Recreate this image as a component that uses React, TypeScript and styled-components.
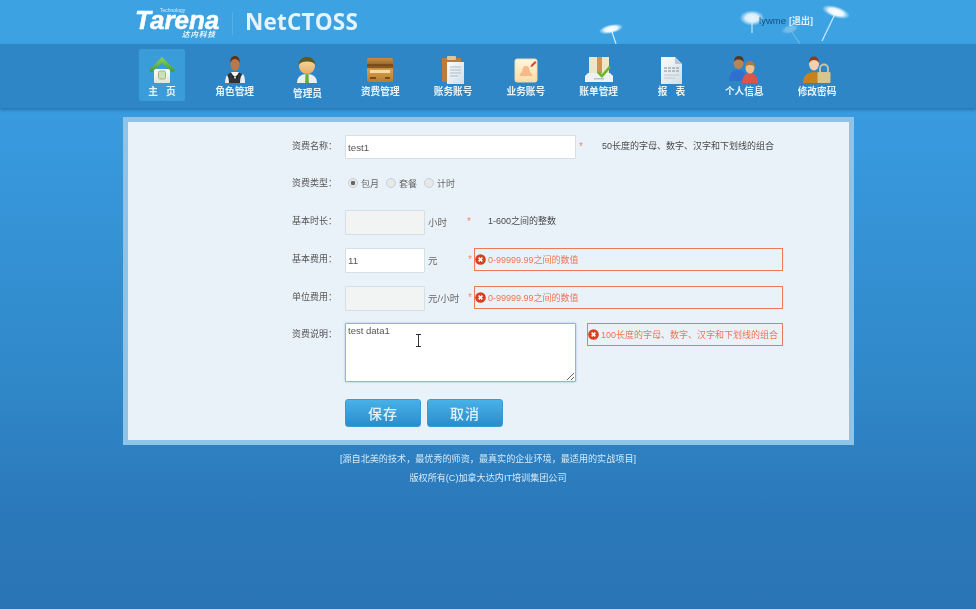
import React from "react";
import styled, { createGlobalStyle } from "styled-components";

const Global = createGlobalStyle`
  html, body { margin: 0; padding: 0; height: 100%; overflow: hidden; background: #2a74b4; }
  #root { height: 100%; }
  * { box-sizing: border-box; }
`;

const Page = styled.div`
  width: 976px;
  height: 609px;
  overflow: hidden;
  position: relative;
  font-family: "Liberation Sans", "Noto Sans CJK SC", sans-serif;
  font-size: 9px;
  color: #444;
  background: linear-gradient(180deg, #3a9de2 0, #399be0 110px, #3088c9 380px, #2b78b9 520px, #2a74b5 609px);
  filter: blur(0.5px);
`;

const Header = styled.header`
  position: relative;
  height: 44px;
  background: #3ca2e1;
  display: flex;
  align-items: flex-start;
  padding-left: 135px;
`;

const Logo = styled.div`
  position: relative;
  width: 98px;
  height: 36px;
  margin-top: 2px;
  &::after {
    content: "";
    position: absolute;
    right: 0;
    top: 10px;
    height: 23px;
    width: 1px;
    background: #55b0e8;
  }
`;
const LogoWord = styled.div`
  font: italic bold 26px/18px "Liberation Sans", sans-serif;
  color: #fff;
  margin-top: 9px;
  -webkit-text-stroke: 0.5px #fff;
`;
const LogoTech = styled.span`
  position: absolute;
  left: 25px;
  top: 5px;
  font: 5px/6px "Liberation Sans", sans-serif;
  color: #d7ecf9;
`;
const LogoCn = styled.div`
  font: italic bold 7.5px/9px "Noto Sans CJK SC", sans-serif;
  color: #eaf6fd;
  margin: 0 0 0 47px;
  letter-spacing: 1px;
`;
const Product = styled.h1`
  margin: 7px 0 0 12px;
  font: 700 22.5px/30px "Open Sans", sans-serif;
  letter-spacing: 0.2px;
  color: #e4f4fe;
`;
const UserBox = styled.div`
  margin: 15px 163px 0 auto;
  position: relative;
  z-index: 2;
  font-size: 9.5px;
  line-height: 12px;
  color: #17507f;
`;
const Logout = styled.a`
  color: #dff2fd;
  font-weight: 700;
  margin-left: 3px;
  font-size: 9px;
`;
const Dandelions = styled.svg`
  position: absolute;
  left: 590px;
  top: 0;
`;

const Nav = styled.nav`
  height: 64px;
  background: #2e86c6;
  box-shadow: 0 2px 3px rgba(25, 90, 145, 0.6);
  display: flex;
  padding: 5px 0 0 125.5px;
  position: relative;
`;
const NavItem = styled.div<{ $active?: boolean }>`
  width: 72.8px;
  height: 52px;
  display: flex;
  flex-direction: column;
  align-items: center;
  position: relative;
  padding-top: 6px;
  &::before {
    content: "";
    display: ${(p) => (p.$active ? "block" : "none")};
    position: absolute;
    left: 13.5px;
    top: 0;
    width: 46px;
    height: 52px;
    background: #3a9cd8;
    border-radius: 2px;
  }
`;
const NavIcon = styled.svg`
  position: relative;
  width: 30px;
  height: 30px;
`;
const NavLabel = styled.span<{ $low?: boolean }>`
  position: relative;
  margin-top: ${(p) => (p.$low ? "3px" : "1px")};
  font-size: 9.7px;
  line-height: 12px;
  font-weight: 700;
  color: #e6f3fb;
  white-space: pre;
`;

const Card = styled.main`
  width: 731px;
  height: 328px;
  margin: 9px 0 0 123px;
  background: #eaf2f9;
  border: 5px solid #8fc3e8;
  padding: 13px 0 0 164px;
`;
const Row = styled.div<{ $gap: number; $h?: number }>`
  display: flex;
  align-items: flex-start;
  margin-top: ${(p) => p.$gap}px;
  height: ${(p) => p.$h ?? 25}px;
`;
const Label = styled.label<{ $lh?: number }>`
  width: 53px;
  flex: none;
  line-height: ${(p) => p.$lh ?? 23}px;
  color: #555;
  font-size: 9px;
  white-space: pre;
`;
const TextInput = styled.input<{ $w: number; $h?: number }>`
  width: ${(p) => p.$w}px;
  height: ${(p) => p.$h ?? 25}px;
  flex: none;
  padding: 0 2px 0 2px;
  border: 1px solid #d6dfe6;
  border-radius: 1px;
  background: #fff;
  font: 9.8px "Liberation Sans", sans-serif;
  color: #555;
  outline: none;
  &:disabled { background: #f2f3f3; }
`;
const Unit = styled.span<{ $w: number }>`
  width: ${(p) => p.$w}px;
  flex: none;
  padding-left: 3px;
  line-height: 26px;
  color: #666;
  font-size: 9.5px;
  white-space: nowrap;
`;
const Star = styled.span<{ $w?: number; $ml?: number }>`
  color: #f18a6b;
  font-size: 10px;
  line-height: 24px;
  flex: none;
  width: ${(p) => p.$w ?? 8}px;
  margin-left: ${(p) => p.$ml ?? 0}px;
`;
const Hint = styled.span<{ $ml: number }>`
  margin-left: ${(p) => p.$ml}px;
  line-height: 22px;
  color: #4a4a4a;
  font-size: 9px;
`;
const ErrorBox = styled.div<{ $w: number; $ml?: number }>`
  width: ${(p) => p.$w}px;
  height: 23px;
  flex: none;
  margin-left: ${(p) => p.$ml ?? 0}px;
  border: 1.5px solid #ec7a58;
  display: flex;
  align-items: center;
  gap: 2px;
  color: #ef7552;
  font-size: 9px;
`;
const ErrorGlyph = styled.svg`
  width: 11px;
  height: 11px;
  flex: none;
`;
const RadioGroup = styled.div`
  display: flex;
  align-items: center;
  height: 24px;
  padding-left: 3px;
`;
const RadioLabel = styled.label`
  display: flex;
  align-items: center;
  gap: 2px;
  margin-right: 7px;
  font-size: 9px;
  color: #666;
`;
const Radio = styled.input`
  appearance: none;
  width: 10px;
  height: 10px;
  margin: 0 1px 0 0;
  border: 1px solid #c9cfd3;
  border-radius: 50%;
  background: #e6e9ea;
  position: relative;
  &:checked {
    background: radial-gradient(circle, #666 0 2px, #e6e9ea 2.5px);
  }
`;
const AreaWrap = styled.div`
  position: relative;
  width: 231px;
  height: 59px;
  flex: none;
`;
const Area = styled.textarea`
  display: block;
  width: 231px;
  height: 59px;
  padding: 1px 2px;
  border: 1px solid #8fb3e4;
  border-radius: 1px;
  background: #fff;
  font: 9.5px/12px "Liberation Sans", sans-serif;
  color: #555;
  outline: none;
  box-shadow: 0 0 2px #8fb3e4;
`;
const Caret = styled.svg`
  position: absolute;
  left: 70px;
  top: 11px;
  width: 7px;
  height: 13px;
`;
const Buttons = styled.div`
  display: flex;
  gap: 6px;
  margin: 17px 0 0 53px;
`;
const Btn = styled.button`
  width: 76px;
  height: 28px;
  padding: 0;
  border: 1px solid #3b9ad6;
  border-radius: 3px;
  background: linear-gradient(180deg, #48b1e8 0, #2a8dcc 100%);
  color: #e2f3fc;
  font: 500 14px/26px "Noto Sans CJK SC", sans-serif;
  letter-spacing: 1px;
`;
const Footer = styled.footer`
  text-align: center;
  color: #d4eaf9;
  font-size: 9.1px;
  line-height: 19px;
  padding-top: 5px;
`;

const G = () => (
  <defs>
    <linearGradient id="roof" x1="0" y1="0" x2="0" y2="1"><stop offset="0" stopColor="#8fd45a" /><stop offset="1" stopColor="#3c9a2c" /></linearGradient>
    <linearGradient id="wall" x1="0" y1="0" x2="0" y2="1"><stop offset="0" stopColor="#fff" /><stop offset="1" stopColor="#dfe5d8" /></linearGradient>
    <linearGradient id="wood" x1="0" y1="0" x2="0" y2="1"><stop offset="0" stopColor="#c98d3f" /><stop offset="0.4" stopColor="#8a5a22" /><stop offset="0.45" stopColor="#d9a04c" /><stop offset="1" stopColor="#b57e30" /></linearGradient>
    <linearGradient id="paper" x1="0" y1="0" x2="1" y2="1"><stop offset="0" stopColor="#fafcfd" /><stop offset="1" stopColor="#d2dde5" /></linearGradient>
    <linearGradient id="skin" x1="0" y1="0" x2="0" y2="1"><stop offset="0" stopColor="#f9dca0" /><stop offset="1" stopColor="#e5ad68" /></linearGradient>
    <linearGradient id="note" x1="0" y1="0" x2="0" y2="1"><stop offset="0" stopColor="#fff7df" /><stop offset="1" stopColor="#f8dca6" /></linearGradient>
    <radialGradient id="puff"><stop offset="0" stopColor="#ffffff" /><stop offset="0.55" stopColor="#f2fbff" stopOpacity="0.95" /><stop offset="1" stopColor="#cfeefc" stopOpacity="0.1" /></radialGradient>
  </defs>
);

const HomeIcon = () => (
  <NavIcon viewBox="0 0 30 30">
    <path d="M7 14h16v13a1 1 0 0 1-1 1H8a1 1 0 0 1-1-1z" fill="url(#wall)" />
    <path d="M15 2 2 15l2.500 2.500L15 8l10.500 9.500L28 15z" fill="url(#roof)" />
    <rect x="11.500" y="16" width="7" height="8" rx="1.500" fill="#cfe0b8" stroke="#9db87c" />
  </NavIcon>
);
const WaiterIcon = () => (
  <NavIcon viewBox="0 0 30 30">
    <path d="M5 28c0-7 3-11 10-11s10 4 10 11z" fill="#2f3236" />
    <path d="M20 28c0-5 1-8 3-9 2 2 2 6 2 9z" fill="#e9eef2" />
    <path d="M5 28c0-3 .5-6 2-8 1.500 2 2 5 2 8z" fill="#e9eef2" />
    <path d="M11 17l4 7 4-7z" fill="#f3f3f3" />
    <path d="M12 20l3 1.500 3-1.500v3l-3-1.500-3 1.500z" fill="#222" />
    <ellipse cx="15" cy="9" rx="4.500" ry="7" fill="#b9794c" />
    <path d="M10.500 8c-.5-5 1.500-7 4.500-7s5 2 4.500 7c-1-3-2.500-4-4.500-4s-3.500 1-4.500 4z" fill="#5f3416" />
  </NavIcon>
);
const ManagerIcon = () => (
  <NavIcon viewBox="0 0 30 30">
    <path d="M5 28c0-6 4-9 10-9s10 3 10 9z" fill="#e8f0ee" />
    <path d="M13.500 19h3l.5 9h-4z" fill="#6fae3a" />
    <ellipse cx="15" cy="11" rx="8" ry="8" fill="url(#skin)" />
    <path d="M6.500 10C7 4 11 2 15 2s8 2 8.500 8c-2-3-5-3.500-8.500-3.500S8.500 7 6.500 10z" fill="#5d5a28" />
  </NavIcon>
);
const CardIcon = () => (
  <NavIcon viewBox="0 0 30 30">
    <rect x="2" y="3" width="26" height="24" rx="2" fill="url(#wood)" />
    <rect x="2" y="9" width="26" height="2.500" fill="#7b4d1b" />
    <rect x="5" y="15" width="20" height="3" fill="#f3dca4" />
    <rect x="5" y="22" width="6" height="2" fill="#7b4d1b" />
    <rect x="20" y="22" width="5" height="2" fill="#7b4d1b" />
  </NavIcon>
);
const ClipIcon = () => (
  <NavIcon viewBox="0 0 30 30">
    <rect x="4" y="3" width="19" height="24" rx="1" fill="#bd7b3a" />
    <rect x="9" y="1" width="9" height="4" rx="1" fill="#d9c6a3" />
    <path d="M9 7h17v22H9z" fill="url(#paper)" />
    <path d="M12 12h11M12 15h11M12 18h11M12 21h8" stroke="#aebbc6" strokeWidth="1" />
  </NavIcon>
);
const BizIcon = () => (
  <NavIcon viewBox="0 0 30 30">
    <rect x="4" y="4" width="22" height="23" rx="2" fill="url(#note)" stroke="#f1d9a8" />
    <path d="M15 11c2.500 0 3.500 2 3.500 4 0 2 2.500 3 3 6H8.500c.5-3 3-4 3-6 0-2 1-4 3.500-4z" fill="#f5b98a" />
    <path d="M20 10l4-4 1.500 1.500-4 4-2 .5z" fill="#d8443a" />
  </NavIcon>
);
const BillIcon = () => (
  <NavIcon viewBox="0 0 30 30">
    <path d="M5 2h20v20H5z" fill="#eee6c8" />
    <path d="M13 2h5v20h-5z" fill="#c9965c" />
    <path d="M1 21l3-3h22l3 3v6H1z" fill="#eef2f3" />
    <path d="M15 16l3 3 7-8 2 1.500L18 23l-5-5z" fill="#6cb52f" />
    <rect x="10" y="23" width="10" height="1.500" fill="#b9c4cb" />
  </NavIcon>
);
const DocIcon = () => (
  <NavIcon viewBox="0 0 30 30">
    <path d="M5 2h14l7 7v20H5z" fill="url(#paper)" />
    <path d="M19 2l7 7h-7z" fill="#bac8d2" />
    <path d="M8 13h15M8 16h15" stroke="#7f8c96" strokeWidth="1" strokeDasharray="3 1" />
    <path d="M8 20h15M8 23h11" stroke="#bdc8d0" strokeWidth="1" />
  </NavIcon>
);
const PeopleIcon = () => (
  <NavIcon viewBox="0 0 30 30">
    <path d="M0 26c0-7 3-11 9-11s8 4 9 11z" fill="#2f6fd0" />
    <ellipse cx="9.500" cy="8" rx="5" ry="6" fill="#b98558" />
    <path d="M5 7c0-4 2-6 5-6s5 2 4.500 6C13 5 11 4.500 9.500 4.500S6 5 5 7z" fill="#4a3a2c" />
    <path d="M13 28c0-6 3-10 8-10s8 4 8 10z" fill="#d9574a" />
    <ellipse cx="21" cy="13" rx="4.500" ry="5.500" fill="#eec08e" />
    <path d="M16 13c0-5 2-7 5-7s5 2 5 7c-1-2-2-3-5-3s-4 1-5 3z" fill="#a97d3e" />
  </NavIcon>
);
const LockIcon = () => (
  <NavIcon viewBox="0 0 30 30">
    <path d="M1 28c0-7 4-11 11-11 6 0 10 3 10 11z" fill="#c7821d" />
    <ellipse cx="12" cy="9" rx="5" ry="6.500" fill="#f5cfae" />
    <path d="M7 8c0-4 2-6.500 5-6.500S17 4 17 8c-1-2-3-3-5-3S8 6 7 8z" fill="#8a3e1c" />
    <path d="M18 17v-3.500a4 4 0 0 1 8 0V17" fill="none" stroke="#c8c7aa" strokeWidth="1.800" />
    <rect x="15.500" y="17" width="13" height="11" rx="1" fill="#d6c58c" />
  </NavIcon>
);

const ErrIcon = () => (
  <ErrorGlyph viewBox="0 0 12 12">
    <circle cx="6" cy="6" r="5.800" fill="#d8401f" />
    <path d="M4 4l4 4M8 4l-4 4" stroke="#fff" strokeWidth="1.800" />
  </ErrorGlyph>
);

const Dande = ({ x, y, rx, ry, rot, x2, y2, op = 1 }: { x: number; y: number; rx: number; ry: number; rot: number; x2: number; y2: number; op?: number }) => (
  <g opacity={op}>
    <path d={`M${x} ${y}L${x2} ${y2}`} stroke="#cfeefc" strokeWidth="1.200" />
    <ellipse cx={x} cy={y} rx={rx + 2} ry={ry + 1.5} transform={`rotate(${rot} ${x} ${y})`} fill="url(#puff)" />
  </g>
);

const items: [string, React.FC, boolean?][] = [
  ["主   页", HomeIcon],
  ["角色管理", WaiterIcon],
  ["管理员", ManagerIcon, true],
  ["资费管理", CardIcon],
  ["账务账号", ClipIcon],
  ["业务账号", BizIcon],
  ["账单管理", BillIcon],
  ["报   表", DocIcon],
  ["个人信息", PeopleIcon],
  ["修改密码", LockIcon],
];

export default function App() {
  return (
    <Page>
      <Global />
      <svg width="0" height="0" style={{ position: "absolute" }}><G /></svg>
      <Header>
        <Logo>
          <LogoWord>Tarena</LogoWord>
          <LogoTech>Technology</LogoTech>
          <LogoCn>达内科技</LogoCn>
        </Logo>
        <Product>NetCTOSS</Product>
        <Dandelions width="270" height="44" viewBox="0 0 270 44">
          <Dande x={21} y={29} rx={10} ry={3} rot={-12} x2={26} y2={44} />
          <Dande x={162} y={18} rx={10} ry={6} rot={0} x2={162} y2={33} op={0.9} />
          <Dande x={200} y={29} rx={7} ry={3} rot={-18} x2={210} y2={44} op={0.3} />
          <Dande x={246} y={12} rx={12} ry={4} rot={18} x2={232} y2={41} />
        </Dandelions>
        <UserBox>lywme<Logout>[退出]</Logout></UserBox>
      </Header>
      <Nav>
        {items.map(([t, I, low], i) => (
          <NavItem key={t} $active={i === 0}>
            <I />
            <NavLabel $low={low}>{t}</NavLabel>
          </NavItem>
        ))}
      </Nav>
      <Card>
        <Row $gap={0} $h={24}>
          <Label>资费名称：</Label>
          <TextInput $w={231} $h={24} defaultValue="test1" />
          <Star $ml={3}>*</Star>
          <Hint $ml={15}>50长度的字母、数字、汉字和下划线的组合</Hint>
        </Row>
        <Row $gap={12} $h={24}>
          <Label $lh={24}>资费类型：</Label>
          <RadioGroup>
            <RadioLabel><Radio type="radio" name="t" defaultChecked />包月</RadioLabel>
            <RadioLabel><Radio type="radio" name="t" />套餐</RadioLabel>
            <RadioLabel><Radio type="radio" name="t" />计时</RadioLabel>
          </RadioGroup>
        </Row>
        <Row $gap={15}>
          <Label>基本时长：</Label>
          <TextInput $w={80} disabled />
          <Unit $w={42}>小时</Unit>
          <Star>*</Star>
          <Hint $ml={13}>1-600之间的整数</Hint>
        </Row>
        <Row $gap={13}>
          <Label>基本费用：</Label>
          <TextInput $w={80} defaultValue="11" />
          <Unit $w={43}>元</Unit>
          <Star $w={6}>*</Star>
          <ErrorBox $w={309}><ErrIcon />0-99999.99之间的数值</ErrorBox>
        </Row>
        <Row $gap={13}>
          <Label>单位费用：</Label>
          <TextInput $w={80} disabled />
          <Unit $w={43}>元/小时</Unit>
          <Star $w={6}>*</Star>
          <ErrorBox $w={309}><ErrIcon />0-99999.99之间的数值</ErrorBox>
        </Row>
        <Row $gap={12} $h={59}>
          <Label>资费说明：</Label>
          <AreaWrap>
            <Area defaultValue="test data1" />
            <Caret viewBox="0 0 7 13"><path d="M1 .5h5M1 12.500h5M3.500 1v11" stroke="#333" strokeWidth="1" fill="none" /></Caret>
          </AreaWrap>
          <ErrorBox $w={196} $ml={11}><ErrIcon />100长度的字母、数字、汉字和下划线的组合</ErrorBox>
        </Row>
        <Buttons>
          <Btn>保存</Btn>
          <Btn>取消</Btn>
        </Buttons>
      </Card>
      <Footer>
        <div>[源自北美的技术，最优秀的师资，最真实的企业环境，最适用的实战项目]</div>
        <div>版权所有(C)加拿大达内IT培训集团公司</div>
      </Footer>
    </Page>
  );
}
